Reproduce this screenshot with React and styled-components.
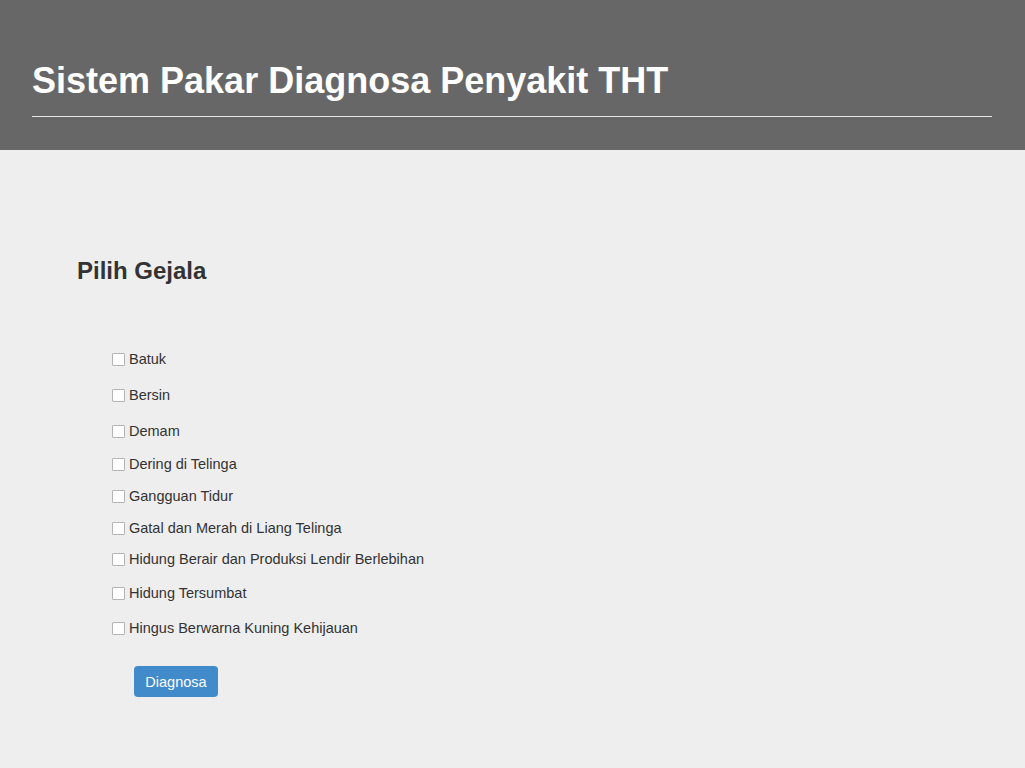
import React from 'react';
import styled, { createGlobalStyle } from 'styled-components';

const GlobalStyle = createGlobalStyle`
  body {
    margin: 0;
    background: #eeeeee;
    font-family: "Liberation Sans", Arial, sans-serif;
    color: #333333;
  }
`;

const Header = styled.header`
  background: #676767;
  height: 150px;
  padding: 61px 33px 0 32px;
  box-sizing: border-box;
`;

const Title = styled.h1`
  margin: 0;
  font-size: 36px;
  line-height: 1.1;
  font-weight: bold;
  color: #ffffff;
`;

const Rule = styled.hr`
  margin: 15px 0 0;
  border: 0;
  border-top: 1px solid #e6e6e6;
`;

const Main = styled.main`
  padding: 108px 77px 60px;
`;

const SectionTitle = styled.h3`
  margin: 0;
  font-size: 24px;
  line-height: 1.1;
  font-weight: bold;
  color: #333333;
`;

const SymptomList = styled.div`
  display: flex;
  flex-direction: column;
  padding-left: 35px;
  margin-top: 65px;
`;

const Row = styled.label`
  display: flex;
  align-items: center;
  gap: 4px;
  height: 20px;
  margin-top: ${p => p.$gap}px;
  font-size: 14.5px;
  color: #333333;
`;

const Box = styled.input.attrs({ type: 'checkbox' })`
  appearance: none;
  margin: 0;
  width: 13px;
  height: 13px;
  border: 1px solid #b4b4b4;
  border-radius: 1px;
  background: #ffffff;
  box-sizing: border-box;
`;

const Button = styled.button`
  margin: 28px 0 0 57px;
  width: 84px;
  height: 31px;
  border: 0;
  border-radius: 4px;
  background: #428bca;
  color: #ffffff;
  font-family: "Liberation Sans", Arial, sans-serif;
  font-size: 14.5px;
  padding: 0;
`;

const symptoms = [
  ['Batuk', 0],
  ['Bersin', 16],
  ['Demam', 16],
  ['Dering di Telinga', 13],
  ['Gangguan Tidur', 12],
  ['Gatal dan Merah di Liang Telinga', 12],
  ['Hidung Berair dan Produksi Lendir Berlebihan', 11],
  ['Hidung Tersumbat', 14],
  ['Hingus Berwarna Kuning Kehijauan', 15],
];

const App = () => (
  <>
    <GlobalStyle />
    <Header>
      <Title>Sistem Pakar Diagnosa Penyakit THT</Title>
      <Rule />
    </Header>
    <Main>
      <SectionTitle>Pilih Gejala</SectionTitle>
      <SymptomList>
        {symptoms.map(([name, gap]) => (
          <Row key={name} $gap={gap}>
            <Box />
            {name}
          </Row>
        ))}
      </SymptomList>
      <Button>Diagnosa</Button>
    </Main>
  </>
);

export default App;
